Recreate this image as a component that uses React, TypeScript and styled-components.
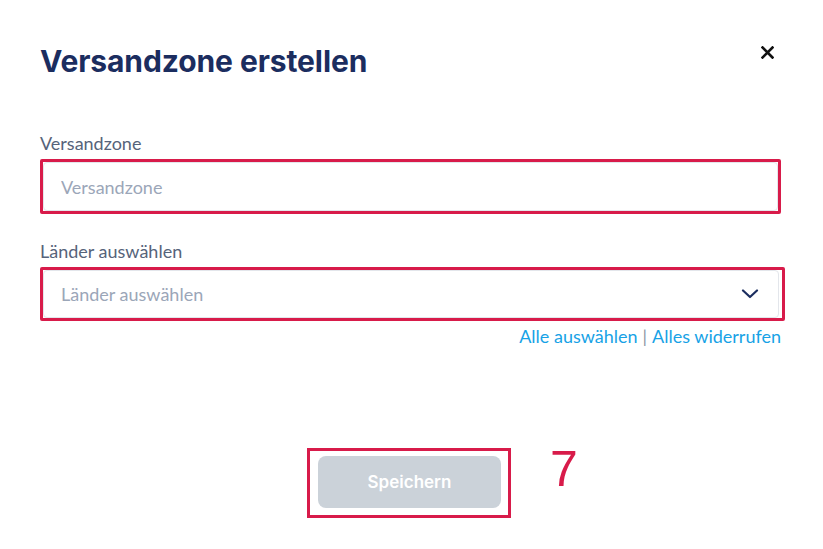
import React from "react";
import styled, { createGlobalStyle } from "styled-components";

const Global = createGlobalStyle`
  html, body { margin: 0; padding: 0; background: #ffffff; }
  body { font-family: Lato, "Open Sans", sans-serif; }
  * { box-sizing: border-box; }
`;

const Modal = styled.div`
  width: 823px;
  height: 549px;
  padding: 41px 42px 0 40px;
  display: flex;
  flex-direction: column;
`;

const Header = styled.div`
  display: flex;
  align-items: flex-start;
  justify-content: space-between;
  height: 40px;
`;

const Title = styled.h1`
  margin: 0;
  font-family: Inter, "Open Sans", sans-serif;
  font-weight: 700;
  font-size: 30px;
  line-height: 40px;
  letter-spacing: -0.1px;
  color: #1b2d5f;
`;

const Close = styled.button`
  border: 0;
  background: none;
  padding: 0;
  margin-top: 4px;
  margin-right: 7px;
  width: 14px;
  height: 14px;
  display: flex;
  align-items: center;
  justify-content: center;
  cursor: pointer;
`;

const Field = styled.div<{ $top: number }>`
  margin-top: ${(p) => p.$top}px;
  display: flex;
  flex-direction: column;
`;

const Label = styled.label`
  font-size: 18px;
  color: #56637a;
  line-height: 20px;
  margin-bottom: 6px;
`;

const Highlight = styled.div<{ $wide?: boolean }>`
  border: 3px solid #d81b4a;
  border-radius: 2px;
  position: relative;
  margin-right: ${(p) => (p.$wide ? "-4px" : "0")};
`;

const Input = styled.input`
  width: 100%;
  height: 49px;
  border: 1px solid #e3e6eb;
  border-radius: 4px;
  padding: 0 17px;
  font-family: Lato, "Open Sans", sans-serif;
  font-size: 18px;
  color: #1b2d5f;
  outline: none;
  &::placeholder { color: #9ba6b8; }
`;

const Select = styled.div`
  height: 48px;
  margin-right: 3px;
  border: 1px solid #e3e6eb;
  border-radius: 4px;
  padding: 0 19px 0 17px;
  display: flex;
  align-items: center;
  justify-content: space-between;
  font-size: 18px;
  color: #9ba6b8;
`;

const Links = styled.div`
  display: flex;
  justify-content: flex-end;
  gap: 5px;
  margin-top: 5px;
  font-size: 18px;
  color: #17a2e6;
  line-height: 20px;
`;

const Link = styled.a`
  color: inherit;
  text-decoration: none;
  cursor: pointer;
`;

const Sep = styled.span`
  color: #8a94a6;
`;

const Footer = styled.div`
  margin-top: 102px;
  display: flex;
  justify-content: center;
`;

const ButtonFrame = styled.div`
  position: relative;
  border: 3px solid #d81b4a;
  padding: 5px 7px 7px 8px;
  margin-left: -3px;
`;

const SaveButton = styled.button`
  width: 183px;
  height: 52px;
  border: 0;
  border-radius: 8px;
  background: #cbd2d9;
  color: #ffffff;
  font-family: Inter, "Open Sans", sans-serif;
  font-weight: 600;
  font-size: 17px;
  cursor: not-allowed;
`;

const StepNumber = styled.span`
  position: absolute;
  left: 240px;
  top: -7px;
  font-family: "Liberation Sans", Arial, sans-serif;
  font-size: 50px;
  color: #d81b4a;
  line-height: 1;
`;

export default function App() {
  return (
    <>
      <Global />
      <Modal>
        <Header>
          <Title>Versandzone erstellen</Title>
          <Close aria-label="Schließen">
            <svg width="13" height="13" viewBox="0 0 13 13">
              <path d="M1.5 1.5 L11.5 11.5 M11.5 1.5 L1.5 11.5" stroke="#111" strokeWidth="2.6" strokeLinecap="square" />
            </svg>
          </Close>
        </Header>
        <Field $top={52}>
          <Label>Versandzone</Label>
          <Highlight>
            <Input placeholder="Versandzone" />
          </Highlight>
        </Field>
        <Field $top={27}>
          <Label>Länder auswählen</Label>
          <Highlight $wide>
            <Select>
              <span>Länder auswählen</span>
              <svg width="18" height="10" viewBox="0 0 18 10">
                <path d="M2 1.5 L9 8 L16 1.5" fill="none" stroke="#1b2d5f" strokeWidth="2.2" strokeLinecap="round" strokeLinejoin="round" />
              </svg>
            </Select>
          </Highlight>
          <Links>
            <Link>Alle auswählen</Link>
            <Sep>|</Sep>
            <Link>Alles widerrufen</Link>
          </Links>
        </Field>
        <Footer>
          <ButtonFrame>
            <SaveButton disabled>Speichern</SaveButton>
            <StepNumber>7</StepNumber>
          </ButtonFrame>
        </Footer>
      </Modal>
    </>
  );
}
